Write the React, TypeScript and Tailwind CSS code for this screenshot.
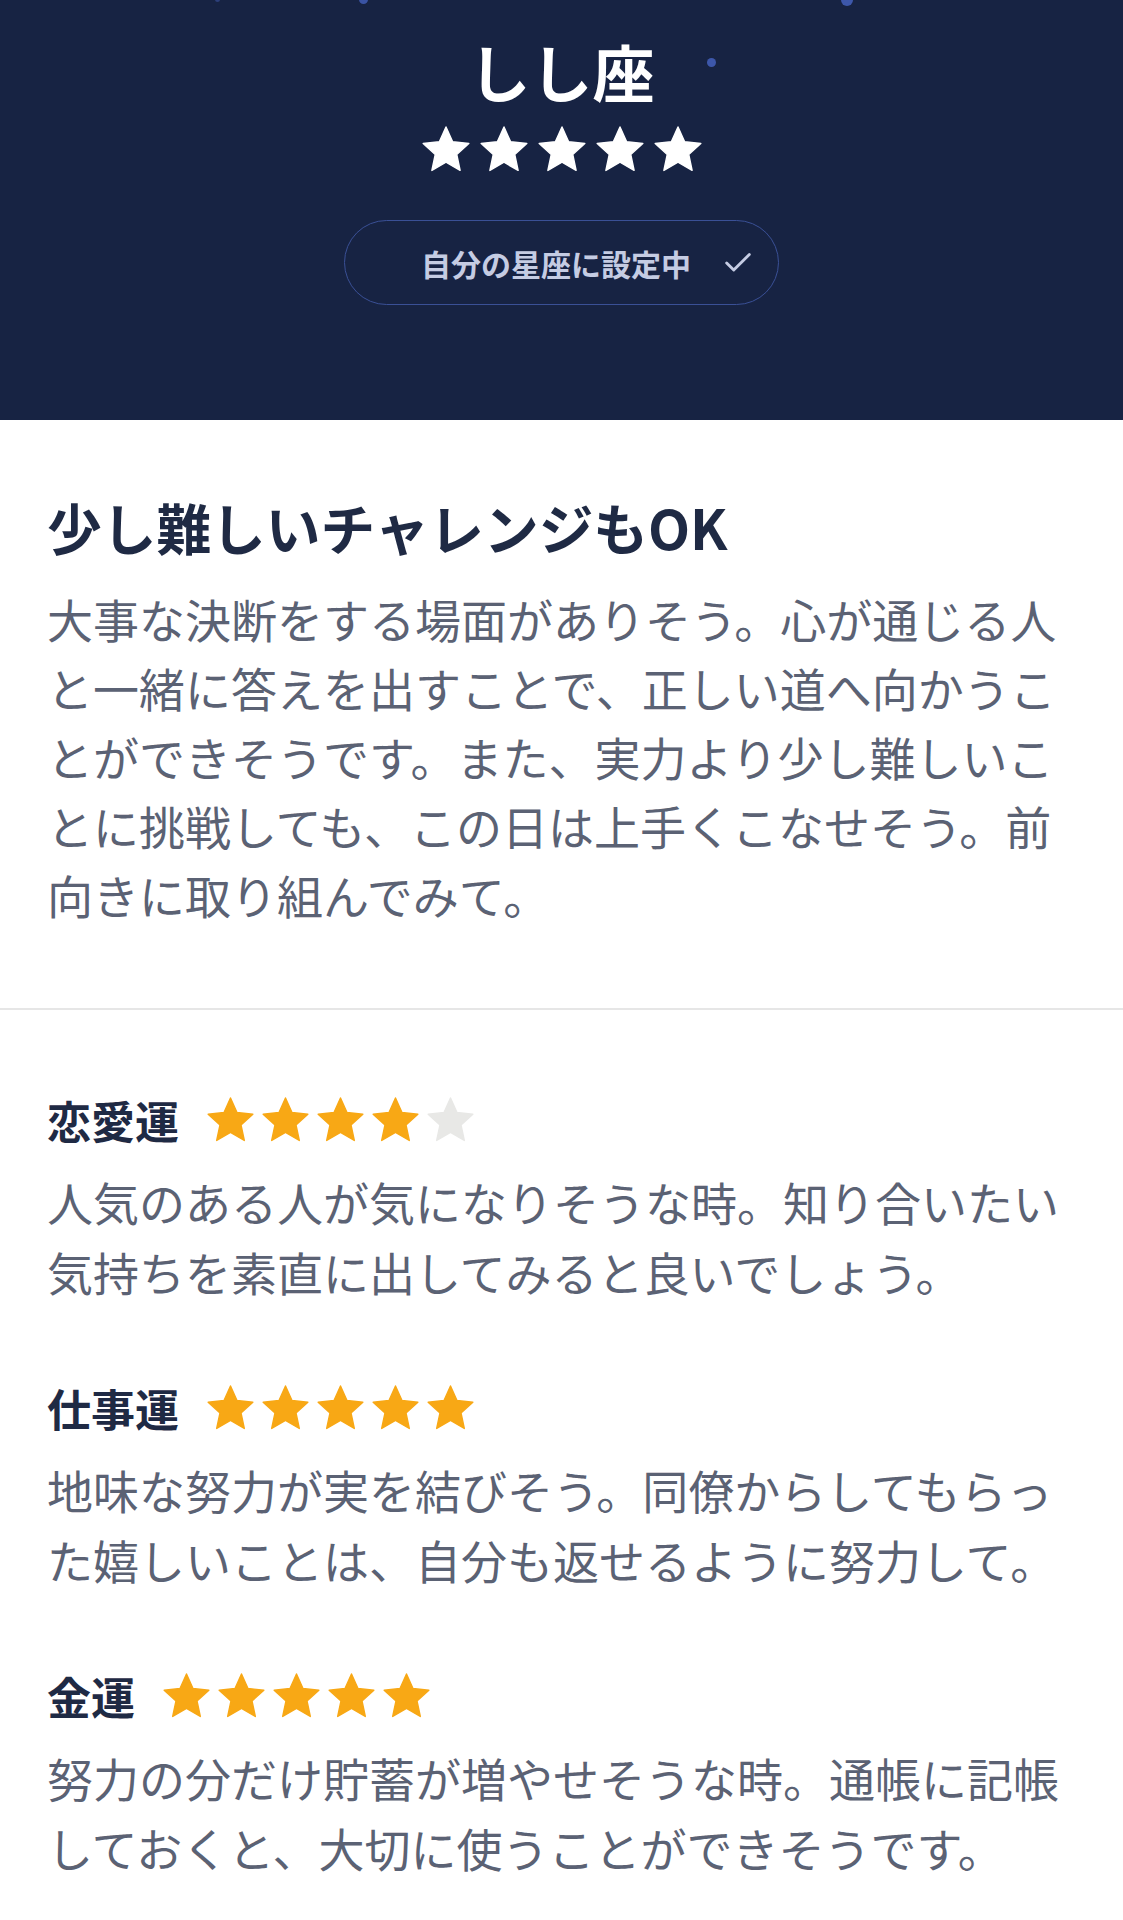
import { Check } from 'lucide-react';

const STAR_POINTS =
  '50,2 63.81,32.99 97.55,36.55 72.35,59.26 79.39,92.45 50,75.5 20.61,92.45 27.65,59.26 2.45,36.55 36.19,32.99';

function Star({ className, color }: { className: string; color: string }) {
  return (
    <svg viewBox="0 0 100 100" className={className}>
      <polygon points={STAR_POINTS} fill={color} stroke={color} strokeWidth="3" strokeLinejoin="round" />
    </svg>
  );
}

function Rating({ value }: { value: number }) {
  return (
    <div className="flex items-center gap-[8px]">
      {[1, 2, 3, 4, 5].map((i) => (
        <Star key={i} className="w-[47px] h-[47px]" color={i <= value ? '#f8a815' : '#e8e8e6'} />
      ))}
    </div>
  );
}

const fortunes = [
  {
    title: '恋愛運',
    stars: 4,
    text: '人気のある人が気になりそうな時。知り合いたい気持ちを素直に出してみると良いでしょう。',
  },
  {
    title: '仕事運',
    stars: 5,
    text: '地味な努力が実を結びそう。同僚からしてもらった嬉しいことは、自分も返せるように努力して。',
  },
  {
    title: '金運',
    stars: 5,
    text: '努力の分だけ貯蓄が増やせそうな時。通帳に記帳しておくと、大切に使うことができそうです。',
  },
];

export default function App() {
  return (
    <div className="min-h-screen bg-white font-['Noto_Sans_CJK_JP',sans-serif]">
      {/* header */}
      <header className="relative overflow-hidden bg-[#172343] pt-[32px] pb-[115px] flex flex-col items-center">
        <span className="absolute left-[215px] -top-[3px] w-[5px] h-[5px] rounded-full bg-[#2c3f7a]" />
        <span className="absolute left-[359px] -top-[5px] w-[9px] h-[9px] rounded-full bg-[#3a53a3]" />
        <span className="absolute left-[841px] -top-[6px] w-[12px] h-[12px] rounded-full bg-[#3d57aa]" />
        <span className="absolute left-[707px] top-[58px] w-[9px] h-[9px] rounded-full bg-[#3d57aa]" />

        <h1 className="text-[62px] leading-[79px] font-bold text-white">しし座</h1>
        <div className="mt-[15px] flex items-center gap-[10px]">
          {[1, 2, 3, 4, 5].map((i) => (
            <Star key={i} className="w-[48px] h-[48px]" color="#ffffff" />
          ))}
        </div>
        <div className="mt-[46px] w-[435px] h-[85px] rounded-full border-[1.5px] border-[#3a5096] flex items-center pl-[76px] gap-[30px]">
          <span className="text-[30px] font-bold text-[#c5cce3] leading-none">自分の星座に設定中</span>
          <Check className="w-[34px] h-[34px] text-[#c5cce3]" strokeWidth={2} />
        </div>
      </header>

      {/* today's message */}
      <section className="px-[47px] pt-[68px] pb-[79px]">
        <h2 className="text-[54.7px] leading-[77px] font-bold text-[#1f2a44]">少し難しいチャレンジもOK</h2>
        <p className="mt-[19px] text-[46px] leading-[69px] text-[#5b6274]">
          大事な決断をする場面がありそう。心が通じる人と一緒に答えを出すことで、正しい道へ向かうことができそうです。また、実力より少し難しいことに挑戦しても、この日は上手くこなせそう。前向きに取り組んでみて。
        </p>
      </section>

      <div className="h-[2px] bg-[#e6e6e6]" />

      {/* fortunes */}
      <section className="px-[47px] pt-[77px] pb-[60px] flex flex-col gap-[69px]">
        {fortunes.map((f) => (
          <div key={f.title}>
            <div className="flex items-center gap-[28px]">
              <h3 className="text-[44px] leading-[66px] font-bold text-[#1f2a44]">{f.title}</h3>
              <Rating value={f.stars} />
            </div>
            <p className="mt-[13px] text-[46px] leading-[70px] text-[#5b6274]">{f.text}</p>
          </div>
        ))}
      </section>
    </div>
  );
}
